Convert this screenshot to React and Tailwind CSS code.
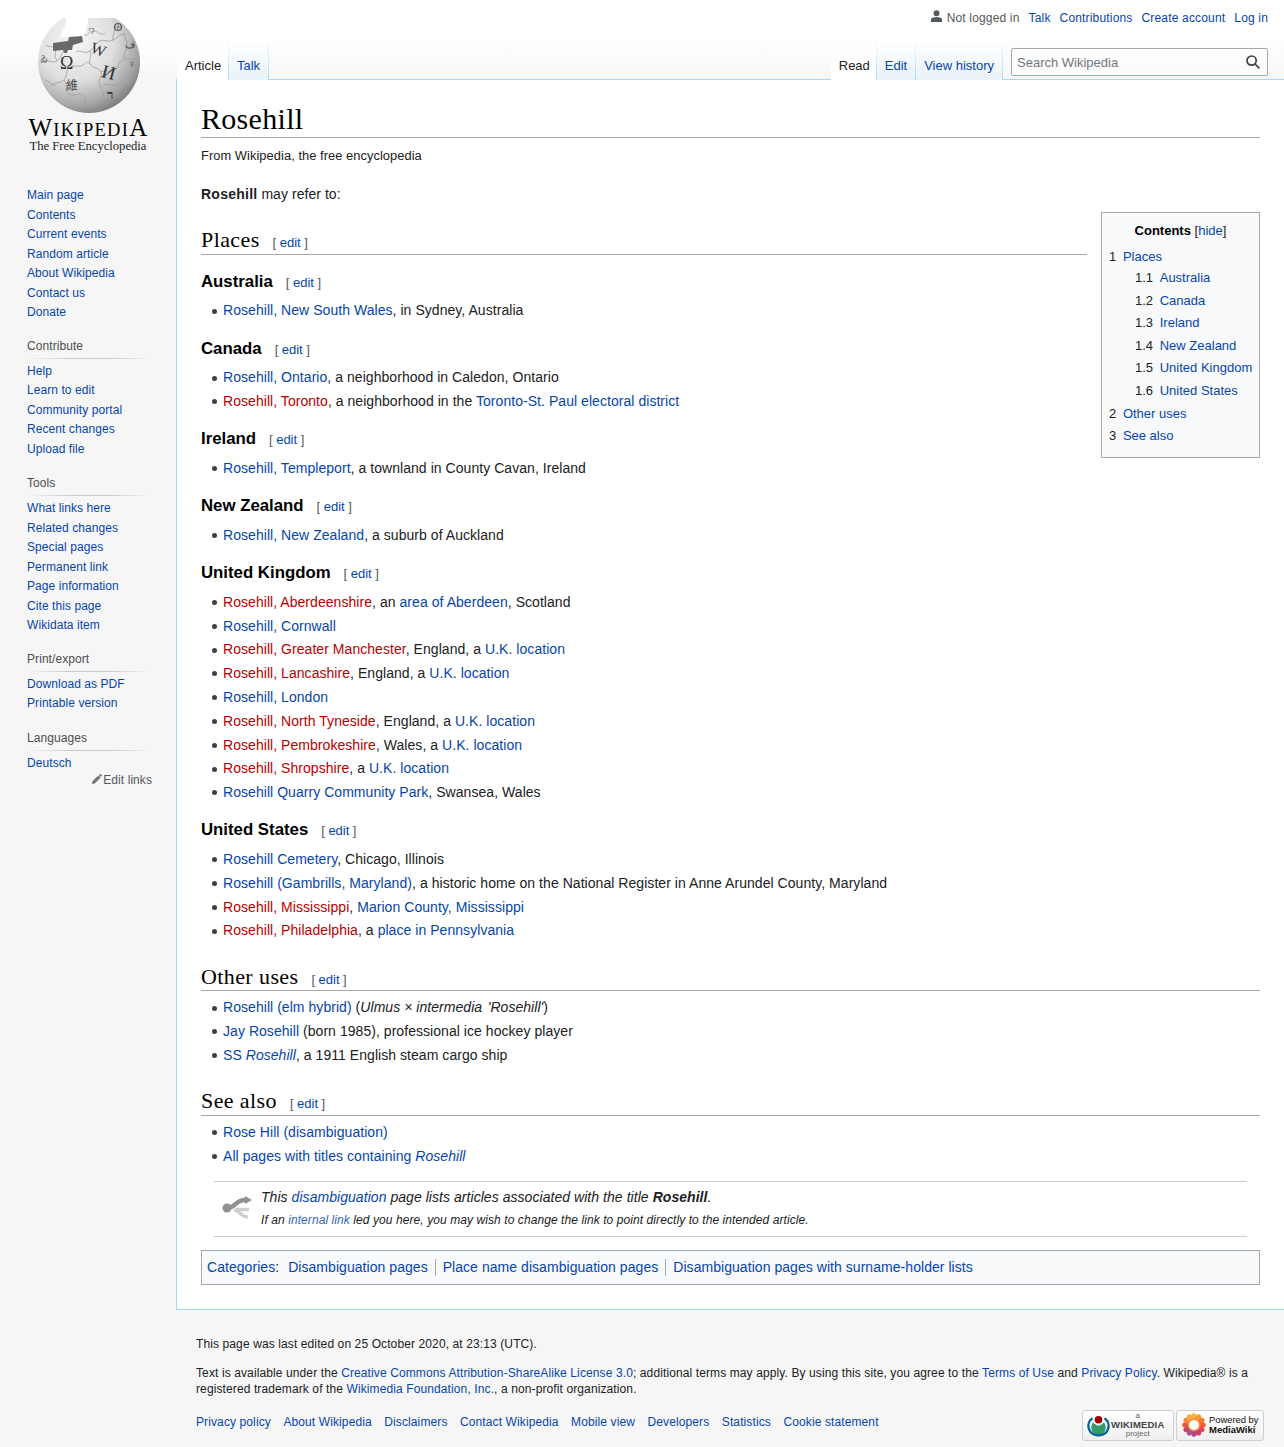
import React from "react";

const L = ({ children }) => <a href="#" className="text-[#0645ad]">{children}</a>;
const R = ({ children }) => <a href="#" className="text-[#ba0000]">{children}</a>;

const sidebarGroups = [
  { items: ["Main page", "Contents", "Current events", "Random article", "About Wikipedia", "Contact us", "Donate"], gap: "" },
  { title: "Contribute", items: ["Help", "Learn to edit", "Community portal", "Recent changes", "Upload file"], gap: "mt-[11px]" },
  { title: "Tools", items: ["What links here", "Related changes", "Special pages", "Permanent link", "Page information", "Cite this page", "Wikidata item"], gap: "mt-[12px]" },
  { title: "Print/export", items: ["Download as PDF", "Printable version"], gap: "mt-[11px]" },
  { title: "Languages", items: ["Deutsch"], gap: "mt-[12px]" },
];

const tocSub = ["Australia", "Canada", "Ireland", "New Zealand", "United Kingdom", "United States"];
const footerLinks = ["Privacy policy", "About Wikipedia", "Disclaimers", "Contact Wikipedia", "Mobile view", "Developers", "Statistics", "Cookie statement"];

const Globe = () => (
  <svg viewBox="35 15 106 98" className="w-[106px] h-[98px] block">
    <defs>
      <radialGradient id="sphere" cx="36%" cy="30%" r="78%">
        <stop offset="0%" stopColor="#f7f7f7" />
        <stop offset="50%" stopColor="#dedede" />
        <stop offset="80%" stopColor="#a6a6a6" />
        <stop offset="100%" stopColor="#6f6f6f" />
      </radialGradient>
    </defs>
    <circle cx="89" cy="62" r="51" fill="url(#sphere)" />
    <g fill="none" stroke="#9d9d9d" strokeWidth="0.8">
      <path d="M76 52c6-3 8 3 14-1 5-3 4-8 10-10 5-2 8 2 13-1 4-2 6-6 12-6" />
      <path d="M90 51c3 6-3 9 1 14 3 4 8 2 10 7 2 5-4 8-1 13 1 4 4 6 3 11" />
      <path d="M42 62c6-3 10 2 15-1 4-3 4-8 8-11" />
      <path d="M50 86c5-5 10-2 14-6 4-5 1-9 5-12 5-4 9 0 14-3 4-3 5-4 8 0" />
      <path d="M64 80c4 6 0 10 5 14 5 3 9-2 14 1 4 3 3 8 1 13" />
      <path d="M101 72c6-3 9 2 14-2 4-3 3-8 8-10 4-2 8 1 14-2" />
      <path d="M113 40c-1-6 3-9 1-14" />
      <path d="M103 85c6-2 9 2 14 0 5-3 4-6 10-8" />
      <path d="M84 35c5 2 4-5 10-4 5 1 6 4 11 3" />
      <path d="M46 45c4 3 7 0 9 4 2 4-2 8 2 11" />
      <path d="M45 80c5 1 6 6 11 5" />
      <path d="M124 33c0 6 4 8 3 13 0 5-4 7-3 13" />
    </g>
    <path d="M35 15h106v3H35z" fill="#fff" />
    <path d="M66 15l-1 11-5 11h23l3-7 2-8v-7z" fill="#fff" />
    <path d="M53 43l15-2 1-4 13-1 1 6-10 3-1 5-4 0-1 3-3 0-1-3-10 1z" fill="#696969" />
    <g fill="#333" fontFamily="Liberation Serif, serif">
      <text x="60" y="69" fontSize="18">Ω</text>
      <text x="91" y="55" fontSize="16" transform="rotate(20 99 49)">W</text>
      <text x="102" y="79" fontSize="19" transform="rotate(15 110 72)">И</text>
      <text x="66" y="90" fontSize="12" fill="#444" fontFamily="Noto Sans CJK TC, serif">維</text>
      <text x="107" y="99" fontSize="13" fontWeight="700">ר</text>
      <text x="40" y="62" fontSize="8" fill="#555" fontFamily="Noto Sans CJK TC, serif">ゐ</text>
      <text x="125" y="48" fontSize="10" fill="#444">ف</text>
      <text x="88" y="33" fontSize="7" fill="#555">ワ</text>
      <text x="130" y="66" fontSize="7" fill="#666">ह</text>
    </g>
    <circle cx="118" cy="27" r="3.500" fill="none" stroke="#555" strokeWidth="1.200" />
    <path d="M115 27h6M118 24v6" stroke="#555" strokeWidth="0.600" />
  </svg>
);

const Sidebar = () => (
  <aside className="w-[176px] shrink-0">
    <div className="h-[160px] flex flex-col items-center pt-[15px] text-black font-['Liberation_Serif',serif]">
      <Globe />
      <div className="mt-[1px] leading-[28px] h-[24px] tracking-[1.3px] whitespace-nowrap ml-[1px]">
        <span className="text-[25px]">W</span><span className="text-[18.5px]">IKIPEDI</span><span className="text-[25px]">A</span>
      </div>
      <div className="text-[12.6px] leading-[16px] h-[16px] text-[#222] whitespace-nowrap">The Free Encyclopedia</div>
    </div>
    <nav className="text-[12px] leading-[19.5px] tracking-[0.07px] pt-[26px]">
      {sidebarGroups.map((group) => (
        <div key={group.items[0]} className={group.gap}>
          {group.title && (
            <div className="ml-[27px] w-[125px] h-[25px] pt-[3px] text-[#4d4d4d] bg-[linear-gradient(to_right,rgba(200,204,209,0)_0,#c8ccd1_33%,#c8ccd1_66%,rgba(200,204,209,0)_100%)] bg-[length:100%_1px] bg-bottom bg-no-repeat mb-[3px]">
              {group.title}
            </div>
          )}
          <ul className="pl-[27px]">
            {group.items.map((item) => (
              <li key={item} className="h-[19.5px]"><L>{item}</L></li>
            ))}
          </ul>
        </div>
      ))}
      <div className="w-[152px] flex justify-end items-center gap-[1px] text-[#54595d] -mt-[2px]">
        <svg viewBox="0 0 12 12" className="w-[11px] h-[11px] mb-[2px]">
          <path d="M1 11l.6-3L8 1.600 10.400 4 4 10.400z M8.700 1l.9-.8a.8.8 0 0 1 1.100 0l1 1a.8.8 0 0 1 0 1.100l-.9.9z" fill="#72777d" />
        </svg>
        <span>Edit links</span>
      </div>
    </nav>
  </aside>
);

const Tab = ({ children, active, blue, width = "" }) => (
  <div
    className={`h-[40px] px-[8px] pt-[17px] text-[13px] leading-[18px] whitespace-nowrap border-r border-r-transparent [border-image:linear-gradient(to_bottom,#fff_0,#a7d7f9_100%)_1] ${width} ${
      active ? "bg-[linear-gradient(to_bottom,rgba(255,255,255,0)_0,#fff_60%)] text-[#202122]" : "bg-[linear-gradient(to_bottom,#fff_0,#e8f2f8_100%)]"
    } ${blue ? "text-[#0645ad]" : ""}`}
  >
    {children}
  </div>
);

const Header = () => (
  <header className="relative z-10 h-[80px] flex flex-col">
    <div className="h-[40px] flex justify-end items-start pt-[9px] pr-[16px] text-[12px] leading-[18px] tracking-[0.17px] gap-[9px]">
      <div className="flex items-center text-[#54595d] gap-[4px]">
        <svg viewBox="0 0 14 14" className="w-[13px] h-[13px] mb-[3px]">
          <circle cx="7" cy="3.600" r="3.200" fill="#54595d" />
          <path d="M1 13v-2.500C1 8.500 3.500 7.500 7 7.500s6 1 6 3V13z" fill="#54595d" />
        </svg>
        <span>Not logged in</span>
      </div>
      <L>Talk</L>
      <L>Contributions</L>
      <L>Create account</L>
      <L>Log in</L>
    </div>
    <div className="flex items-start h-[40px] pl-[1px]">
      <Tab active width="w-[52px]">Article</Tab>
      <Tab blue width="w-[40px]">Talk</Tab>
      <div className="flex-1" />
      <Tab active width="w-[46px]">Read</Tab>
      <Tab blue>Edit</Tab>
      <Tab blue>View history</Tab>
      <div className="ml-[8px] mr-[16px] mt-[8px] w-[257px] h-[28px] shrink-0 flex items-center justify-between border border-[#a2a9b1] rounded-[2px] bg-white/50 pl-[5px] pr-[7px]">
        <span className="text-[13px] pt-[1px] text-[#72777d]">Search Wikipedia</span>
        <svg viewBox="0 0 14 14" className="w-[14px] h-[14px]" fill="none" stroke="#404040" strokeWidth="1.700">
          <circle cx="5.600" cy="5.600" r="4.600" />
          <path d="M9 9l4.400 4.400" />
        </svg>
      </div>
    </div>
  </header>
);

const Edit = () => (
  <span className="ml-[13px] text-[13px] font-normal tracking-normal font-['Liberation_Sans',sans-serif] text-[#54595d] leading-none whitespace-nowrap">
    <span className="mr-[3.500px]">[</span>
    <L>edit</L>
    <span className="ml-[3.500px]">]</span>
  </span>
);

const H2 = ({ children }) => (
  <h2 className="overflow-hidden mt-[21px] mb-[5.250px] text-[22px] leading-[27.300px] tracking-[0.4px] font-normal text-black border-b border-[#a2a9b1] font-['Liberation_Serif',serif]">
    {children}
    <Edit />
  </h2>
);

const H3 = ({ children }) => (
  <h3 className="overflow-hidden mt-[5.040px] pt-[8.900px] text-[16.800px] leading-[26.880px] tracking-normal font-bold text-black">
    {children}
    <Edit />
  </h3>
);

const List = ({ rows }) => (
  <ul className="mt-[3.700px] ml-[22px]">
    {rows.map((row, i) => (
      <li key={i} className={i === rows.length - 1 ? "" : "mb-[1.400px]"}>
        <span className="inline-block align-middle w-[5px] h-[5px] rounded-full bg-[#3f3f3f] -ml-[11px] mr-[6px] mb-[1px]" />
        {row}
      </li>
    ))}
  </ul>
);

const Toc = () => (
  <div className="float-right ml-[14px] w-[159px] h-[246px] border border-[#a2a9b1] bg-[#f8f9fa] p-[7px] text-[13px] leading-[21.280px] tracking-normal">
    <div className="text-center text-black">
      <b>Contents</b> <span className="text-[#202122]">[<L>hide</L>]</span>
    </div>
    <ul className="mt-[4px] whitespace-nowrap">
      <li>
        <div className="flex"><span className="pr-[6.650px]">1</span><L>Places</L></div>
        <ul className="ml-[26px]">
          {tocSub.map((name, i) => (
            <li key={name} className="mb-[1.330px] flex">
              <span className="pr-[6.650px]">1.{i + 1}</span><L>{name}</L>
            </li>
          ))}
        </ul>
      </li>
      <li className="mb-[1.330px] flex"><span className="pr-[6.650px]">2</span><L>Other uses</L></li>
      <li className="flex"><span className="pr-[6.650px]">3</span><L>See also</L></li>
    </ul>
  </div>
);

const Article = () => (
  <main className="-mt-px border border-r-0 border-[#a7d7f9] bg-white pt-[20px] px-[24px] pb-[24px] text-[#202122]">
    <h1 className="text-[30px] leading-[37.440px] tracking-[0.3px] text-black border-b border-[#a2a9b1] mb-[7.200px] font-['Liberation_Serif',serif]">Rosehill</h1>
    <div className="text-[14px] leading-[22.400px] tracking-[0.05px]">
      <div className="text-[12.880px] leading-[19.200px] h-[19.200px]">From Wikipedia, the free encyclopedia</div>
      <p className="mt-[18.200px] mb-[7px]"><b className="tracking-[0.25px]">Rosehill</b> may refer to:</p>
      <Toc />
      <H2>Places</H2>
      <H3>Australia</H3>
      <List rows={[<><L>Rosehill, New South Wales</L>, in Sydney, Australia</>]} />
      <H3>Canada</H3>
      <List
        rows={[
          <><L>Rosehill, Ontario</L>, a neighborhood in Caledon, Ontario</>,
          <><R>Rosehill, Toronto</R>, a neighborhood in the <L>Toronto-St. Paul electoral district</L></>,
        ]}
      />
      <H3>Ireland</H3>
      <List rows={[<><L>Rosehill, Templeport</L>, a townland in County Cavan, Ireland</>]} />
      <H3>New Zealand</H3>
      <List rows={[<><L>Rosehill, New Zealand</L>, a suburb of Auckland</>]} />
      <H3>United Kingdom</H3>
      <List
        rows={[
          <><R>Rosehill, Aberdeenshire</R>, an <L>area of Aberdeen</L>, Scotland</>,
          <L>Rosehill, Cornwall</L>,
          <><R>Rosehill, Greater Manchester</R>, England, a <L>U.K. location</L></>,
          <><R>Rosehill, Lancashire</R>, England, a <L>U.K. location</L></>,
          <L>Rosehill, London</L>,
          <><R>Rosehill, North Tyneside</R>, England, a <L>U.K. location</L></>,
          <><R>Rosehill, Pembrokeshire</R>, Wales, a <L>U.K. location</L></>,
          <><R>Rosehill, Shropshire</R>, a <L>U.K. location</L></>,
          <><L>Rosehill Quarry Community Park</L>, Swansea, Wales</>,
        ]}
      />
      <H3>United States</H3>
      <List
        rows={[
          <><L>Rosehill Cemetery</L>, Chicago, Illinois</>,
          <><L>Rosehill (Gambrills, Maryland)</L>, a historic home on the National Register in Anne Arundel County, Maryland</>,
          <><R>Rosehill, Mississippi</R>, <L>Marion County, Mississippi</L></>,
          <><R>Rosehill, Philadelphia</R>, a <L>place in Pennsylvania</L></>,
        ]}
      />
      <H2>Other uses</H2>
      <List
        rows={[
          <><L>Rosehill (elm hybrid)</L> (<i>Ulmus × intermedia</i> <i className="ml-[1.500px]">'Rosehill'</i>)</>,
          <><L>Jay Rosehill</L> (born 1985), professional ice hockey player</>,
          <><L>SS <i>Rosehill</i></L>, a 1911 English steam cargo ship</>,
        ]}
      />
      <H2>See also</H2>
      <List
        rows={[
          <L>Rose Hill (disambiguation)</L>,
          <><L>All pages with titles containing <i>Rosehill</i></L></>,
        ]}
      />
      <div className="mt-[14px] mx-[13px] h-[55.500px] border-y border-[#c8ccd1] flex items-start">
        <svg viewBox="0 0 30 26" className="ml-[8px] mt-[14px] w-[30px] h-[26px] shrink-0">
          <path d="M12 14c6 0 6 7 14 7M14 13.500h13" fill="none" stroke="#cfcfcf" strokeWidth="3.500" />
          <path d="M5 12c9 0 8-8 18-8" fill="none" stroke="#919191" strokeWidth="4.500" />
          <circle cx="5" cy="12" r="4.500" fill="#919191" />
          <path d="M23 0l7 4-7 4z" fill="#919191" />
        </svg>
        <div className="ml-[9px] pt-[4px] italic">
          <div className="leading-[22.400px]">This <L>disambiguation</L> page lists articles associated with the title <b>Rosehill</b>.</div>
          <div className="text-[12px] tracking-[0.08px] leading-[23px]">If an <a href="#" className="text-[#3366bb]">internal link</a> led you here, you may wish to change the link to point directly to the intended article.</div>
        </div>
      </div>
      <div className="mt-[13.500px] h-[34.400px] border border-[#a2a9b1] bg-[#f8f9fa] px-[5px] flex items-center whitespace-nowrap">
        <L>Categories</L>:
        <span className="ml-[9px] pr-[7px]"><L>Disambiguation pages</L></span>
        <span className="px-[7px] border-l border-[#a2a9b1] leading-[17px]"><L>Place name disambiguation pages</L></span>
        <span className="px-[7px] border-l border-[#a2a9b1] leading-[17px]"><L>Disambiguation pages with surname-holder lists</L></span>
      </div>
    </div>
  </main>
);

const WikimediaBadge = () => (
  <div className="w-[92px] h-[31px] border border-[#cfcfcf] rounded-[3px] bg-[linear-gradient(#fff,#efefef)] flex items-center pl-[4px]">
    <svg viewBox="0 0 24 24" className="w-[23px] h-[23px] shrink-0">
      <circle cx="12" cy="6" r="4" fill="#990000" />
      <path d="M12 23V12c-2.500 0-5-2.500-5.500-3.500C5 10 4.500 12 4.500 14c0 4 3 8 7.500 9zM12 23V12c2.500 0 5-2.500 5.500-3.500C19 10 19.500 12 19.500 14c0 4-3 8-7.500 9z" fill="#339966" />
      <path d="M5 3.500A11 11 0 0 0 12 23.500 11 11 0 0 0 19 3.500l-1.500 2A8.500 8.500 0 0 1 12 21 8.500 8.500 0 0 1 6.500 5.500z" fill="#006699" />
    </svg>
    <div className="ml-[1px] flex flex-col items-center text-[#666] leading-[8px] text-[8px] tracking-normal font-['Liberation_Sans',sans-serif]">
      <span>a</span>
      <span className="font-bold text-[#444] text-[9.500px] leading-[10px] tracking-[0.2px]">WIKIMEDIA</span>
      <span>project</span>
    </div>
  </div>
);

const petals = [
  "#f7b733", "#f79a2f", "#f47d30", "#ee5f3a", "#e34a4d", "#cf3f63",
  "#b54482", "#a8528f", "#c4436d", "#e4573f", "#f3843a", "#f9ab3a",
];

const MediaWikiBadge = () => (
  <div className="w-[88px] h-[31px] border border-[#cfcfcf] rounded-[3px] bg-[linear-gradient(#fff,#efefef)] flex items-center pl-[5px]">
    <svg viewBox="0 0 24 24" className="w-[24px] h-[24px] shrink-0">
      {petals.map((color, i) => (
        <ellipse key={i} cx="12" cy="3.800" rx="2.800" ry="3.600" fill={color} transform={`rotate(${i * 30} 12 12)`} />
      ))}
      <circle cx="12" cy="12" r="6.500" fill="#f9853a" />
      <circle cx="12" cy="12" r="5" fill="#fff" />
    </svg>
    <div className="ml-[3px] text-[#111] text-[9.400px] leading-[10.500px] tracking-normal whitespace-nowrap">
      <div>Powered by</div>
      <div className="font-bold text-[9.500px]">MediaWiki</div>
    </div>
  </div>
);

const Footer = () => (
  <footer className="pl-[20px] pr-[20px] pt-[26.100px] text-[12px] leading-[16.800px] tracking-[0.11px] text-[#202122]">
    <div>This page was last edited on 25 October 2020, at 23:13 (UTC).</div>
    <div className="mt-[12.200px] pr-[10px]">
      Text is available under the <L>Creative Commons Attribution-ShareAlike License 3.0</L>; additional terms may apply. By using this site, you agree to the <L>Terms of Use</L> and <L>Privacy Policy</L>. Wikipedia® is a registered trademark of the <L>Wikimedia Foundation, Inc.</L>, a non-profit organization.
    </div>
    <div className="flex justify-between items-start mt-[15.800px]">
      <div className="flex gap-[12.500px]">
        {footerLinks.map((link) => <L key={link}>{link}</L>)}
      </div>
      <div className="flex gap-[2px] -mt-[4px]">
        <WikimediaBadge />
        <MediaWikiBadge />
      </div>
    </div>
  </footer>
);

export default function App() {
  return (
    <div className="min-h-screen flex bg-[#f6f6f6] bg-[linear-gradient(#fff_50%,#f6f6f6_100%)] bg-[length:100%_80px] bg-no-repeat font-['Liberation_Sans',Arial,sans-serif]">
      <Sidebar />
      <div className="flex-1 min-w-0">
        <Header />
        <Article />
        <Footer />
      </div>
    </div>
  );
}
